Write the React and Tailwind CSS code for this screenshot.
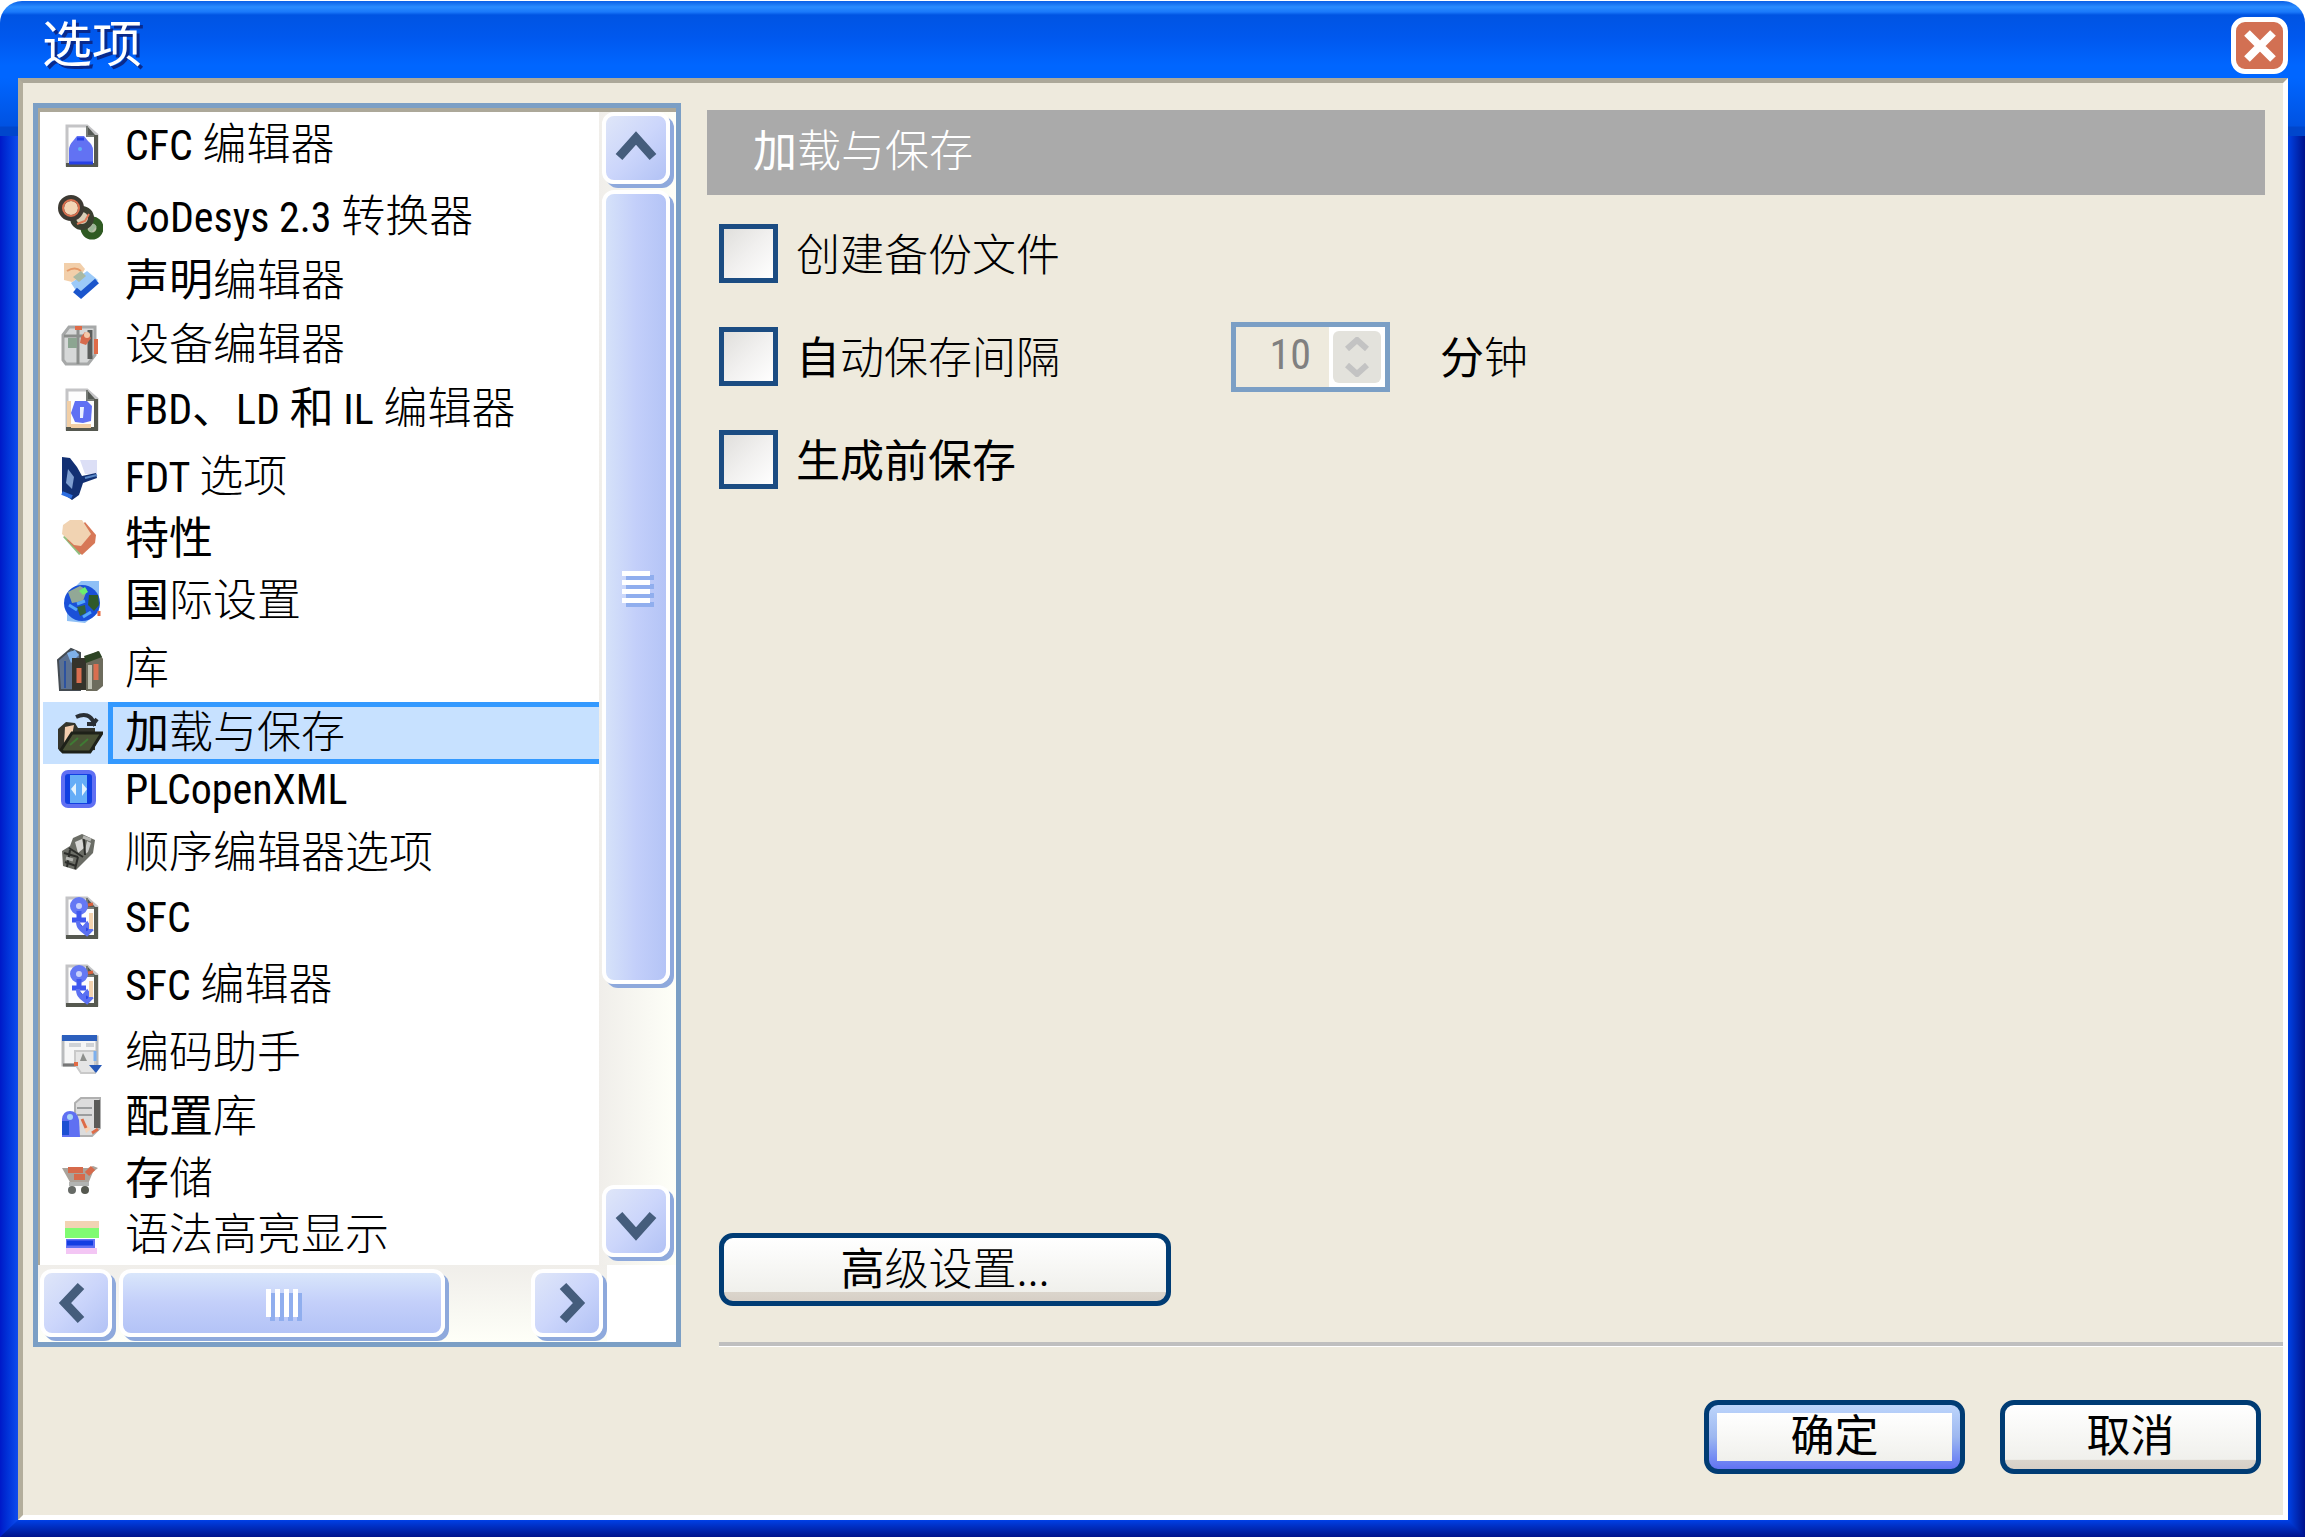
import React, { useState } from "react";

const PageIcon = ({ children }) => (
  <>
    <path d="M12 5h20l10 9v30H12z" fill="#fdfdfd" stroke="#c4c4c6" strokeWidth="3" />
    <path d="M32 5v10h9" fill="#555a55" stroke="#777b77" strokeWidth="2" />
    <path d="M41 14v30H11" fill="none" stroke="#55584f" strokeWidth="4" />
    {children}
  </>
);

const SfcGlyph = () => (
  <PageIcon>
    <circle cx="24" cy="13" r="6" fill="#c9d2fb" stroke="#6478f4" strokeWidth="6" />
    <path d="M24 18v10M17 27h14" stroke="#3f57ee" strokeWidth="5" />
    <path d="M23 28q0 9 8 9M27 37l5-6 4 6-4 4z" stroke="#5b70f2" strokeWidth="4" fill="#2b46e8" />
    <path d="M36 20v16" stroke="#f2d2b0" strokeWidth="4" />
    <path d="M33 12l5-1" stroke="#d8603c" strokeWidth="3" />
  </PageIcon>
);

const ICONS = {
  cfc: (
    <PageIcon>
      <path d="M14 41V29q0-5 4-9l4-5h7l4 5q5 4 5 9v12z" fill="#6272f3" />
      <path d="M14 42h24M22 18h7" stroke="#2740e6" strokeWidth="3" />
      <circle cx="25" cy="28" r="2" fill="#5fb0f6" />
    </PageIcon>
  ),
  codesys: (
    <>
      <circle cx="37" cy="35" r="8" fill="#b9bda6" stroke="#2f5a22" strokeWidth="7" />
      <circle cx="27" cy="25" r="9" fill="#d9d0b8" stroke="#3a3f30" strokeWidth="6" />
      <circle cx="16" cy="15" r="10" fill="#f3d5b5" stroke="#3d3a33" strokeWidth="6" />
      <circle cx="16" cy="15" r="8" fill="none" stroke="#d9704f" strokeWidth="2" />
      <path d="M22 31l8-3 4-7" stroke="#e07a58" strokeWidth="2" fill="none" />
      <path d="M35 38l5-6" stroke="#9bb596" strokeWidth="4" />
    </>
  ),
  declaration: (
    <>
      <path d="M16 26l16-12 11 9-17 18z" fill="#9ccaf8" />
      <path d="M20 33l6 5 16-14" fill="none" stroke="#1b55cc" strokeWidth="6" />
      <path d="M9 6h16l5 6-5 8-8 5-8-2z" fill="#f2cfaa" />
      <path d="M12 14q8-5 14 0" fill="none" stroke="#e59a68" strokeWidth="2" />
      <path d="M18 20l8-6 5 5-7 6z" fill="#a9b9a4" />
    </>
  ),
  device: (
    <>
      <path d="M8 14l6-8h26v28l-7 9H11l-3-4z" fill="#d6d8d8" stroke="#a6a8a8" strokeWidth="3" />
      <path d="M23 8v35M9 15h22" stroke="#8b8e8c" strokeWidth="3" fill="none" />
      <path d="M35 9v29" stroke="#5a5d5b" strokeWidth="5" />
      <rect x="13" y="17" width="9" height="10" fill="#8ca591" />
      <path d="M26 16l4-5 6 6-5 7-6-2z" fill="#d66a4c" />
      <path d="M20 7h7M41 18v15" stroke="#df6b48" strokeWidth="4" />
      <circle cx="32" cy="14" r="3" fill="#f6c8a8" />
    </>
  ),
  fbd: (
    <PageIcon>
      <path d="M14 16v26M16 41h20" stroke="#f2cfa6" strokeWidth="4" />
      <path d="M20 16h12l5 5-1 15-8 2-8-1-4-9z" fill="#6070f3" />
      <path d="M25 22h4l-1 11h-3z" fill="#eaf0ff" />
    </PageIcon>
  ),
  fdt: (
    <>
      <path d="M25 7h17v14H30z" fill="#dcdff6" />
      <path d="M7 4l8 1 7 9 5 9 14-3 1 5-14 5-4 12-7 5-10-7z" fill="#123073" />
      <path d="M13 16l6 8-2 12-6-6z" fill="#7f9fd0" />
      <path d="M7 40l10 4" stroke="#2d6ee0" strokeWidth="4" />
      <path d="M30 25l12-3" stroke="#5b89c8" strokeWidth="2" />
    </>
  ),
  properties: (
    <>
      <path d="M8 22l16 18 5-3-18-17z" fill="#8fbf80" />
      <path d="M30 7l11 13-1 8-13 12-15-15z" fill="#d77857" />
      <path d="M15 5h12l9 14-10 12-7-1L7 19l1-9z" fill="#f1d3b2" />
    </>
  ),
  globe: (
    <>
      <path d="M26 4h18v31L30 46 12 44V18z" fill="#8fc0f6" />
      <circle cx="27" cy="26" r="18" fill="#1a50d8" />
      <path d="M13 15l12-6 7 4-4 11-11 2z" fill="#92a896" />
      <path d="M24 14l6-4 3 5-5 3z" fill="#6bf06d" />
      <path d="M34 18h9l1 10-5 6-6-6z" fill="#2f5a2a" />
      <path d="M22 30l8-2 1 8-6 3z" fill="#31623c" />
      <path d="M14 28l8 5M30 24l-8 3M28 40l8-5" stroke="#55a8fa" strokeWidth="3" />
      <path d="M44 34v5" stroke="#e4693f" strokeWidth="3" />
    </>
  ),
  library: (
    <>
      <path d="M3 15l13-11 9 4v37H5z" fill="#5c7190" stroke="#444b52" strokeWidth="2" />
      <path d="M12 8l8-3 4 5-8 8z" fill="#7fb0e8" />
      <path d="M17 13h14v32H17z" fill="#35332b" />
      <path d="M31 12l12-6 5 8v27l-6 5H31z" fill="#6d6c5d" />
      <path d="M29 11l15-5 3 6-16 6z" fill="#2d4424" />
      <path d="M24 23v15M41 19v16" stroke="#da6e50" strokeWidth="5" />
      <path d="M35 20v24" stroke="#bfc0b2" strokeWidth="4" />
      <path d="M10 16v27" stroke="#2c52a0" strokeWidth="2" />
    </>
  ),
  loadsave: (
    <>
      <path d="M3 20l8-7 9 1 3 5h17v22L8 44l-5-4z" fill="#34352c" />
      <path d="M10 18l9-2-2 11-8 9z" fill="#f3cdae" />
      <path d="M6 41l11-17h30L35 43H8z" fill="#4a5236" stroke="#1e2119" strokeWidth="3" />
      <path d="M15 36l8-7M25 37l8-7" stroke="#3f7a34" strokeWidth="2" />
      <path d="M21 8q13-6 18 6l3-4M32 15h9" fill="none" stroke="#2a2f35" strokeWidth="4" />
    </>
  ),
  plcopen: (
    <>
      <rect x="8" y="7" width="31" height="34" rx="5" fill="#1140e2" stroke="#6070f3" strokeWidth="4" />
      <path d="M15 10h17v28H15z" fill="#65adf7" />
      <path d="M21 18l-5 6 5 7zM27 18l5 6-5 7z" fill="#e4f3fd" />
    </>
  ),
  sequence: (
    <>
      <path d="M7 22l8-5 3-8 9-4 13 6-2 13-17 17-13-4z" fill="#6b6d66" />
      <path d="M20 13l7-3 2 9-6 5z" fill="#d8d8d6" />
      <path d="M32 12l4 2-3 9-4 3z" fill="#cbccca" />
      <path d="M9 24l14 4M10 33l11 4M14 19l14 9M23 28l-3 12M29 9l1 17M15 21l-3 17" stroke="#2c2d2a" strokeWidth="2" />
      <path d="M11 29l7 2M28 8l8 3" stroke="#b5b6b2" strokeWidth="3" />
    </>
  ),
  sfc: <SfcGlyph />,
  coding: (
    <>
      <path d="M8 8h34v28H8z" fill="#f6f6f6" stroke="#b9bbbd" strokeWidth="3" />
      <path d="M7 9h35" stroke="#2c5fbd" strokeWidth="6" />
      <path d="M14 16h12M31 16h8" stroke="#cfd2d6" strokeWidth="4" />
      <path d="M8 36h13" stroke="#777" strokeWidth="3" />
      <path d="M20 22h20v22H26l-6-9z" fill="#e5e5e5" stroke="#c9c9c9" strokeWidth="2" />
      <path d="M28 24l4 8h-7z" fill="#8d8f8c" />
      <path d="M19 33h4v4h-4z" fill="#e26b45" />
      <path d="M40 22v10" stroke="#7db0ee" strokeWidth="3" />
      <path d="M34 36h13l-6 8z" fill="#2558b8" />
    </>
  ),
  repository: (
    <>
      <path d="M20 10l6-5h19v30l-8 8H20z" fill="#dcdcdc" stroke="#b0b0b0" strokeWidth="2" />
      <path d="M42 7v28" stroke="#5a5a58" strokeWidth="6" />
      <path d="M22 15h15M22 22h15" stroke="#9b9d9e" strokeWidth="2" />
      <path d="M7 26q1-8 8-8t9 9l1 17H7z" fill="#5f70f2" />
      <path d="M7 28h7v14H7z" fill="#1c4fd2" />
      <circle cx="15" cy="24" r="3" fill="#a9d4f6" />
      <path d="M27 27l9 9-5 4z" fill="#f6d3b6" />
      <path d="M27 26l4 9M37 40l6-4" stroke="#dd6c48" strokeWidth="3" />
    </>
  ),
  store: (
    <>
      <path d="M7 13h26l5-2 5 2-5 4-5 12H16z" fill="#a9a29a" />
      <path d="M13 15h15M19 22h11M32 19l6-6" stroke="#d66a4b" strokeWidth="6" />
      <path d="M14 29h20" stroke="#b2b4b2" strokeWidth="4" />
      <circle cx="17" cy="35" r="4" fill="#666a66" />
      <circle cx="30" cy="35" r="4" fill="#55584f" />
    </>
  ),
  syntax: (
    <>
      <path d="M10 10h34v7H10z" fill="#f2d3b3" />
      <path d="M10 17h34v10H10z" fill="#80fb72" />
      <path d="M11 28h29v9H11z" fill="#6272f3" />
      <path d="M12 32h26" stroke="#123de2" strokeWidth="5" />
      <path d="M11 37h31v6H11z" fill="#f3c6f4" />
    </>
  ),
};

// text between asterisks is set in the heavier face
const ITEMS = [
  { icon: "cfc", label: "CFC 编辑器", height: "h-[72px]" },
  { icon: "codesys", label: "CoDesys 2.3 转换器", height: "h-16" },
  { icon: "declaration", label: "*声明*编辑器", height: "h-16" },
  { icon: "device", label: "设备编辑器", height: "h-16" },
  { icon: "fbd", label: "FBD*、*LD *和* IL 编辑器", height: "h-[68px]" },
  { icon: "fdt", label: "FDT 选项", height: "h-[62px]" },
  { icon: "properties", label: "*特性*", height: "h-[62px]" },
  { icon: "globe", label: "*国*际设置", height: "h-[68px]" },
  { icon: "library", label: "库", height: "h-16" },
  { icon: "loadsave", label: "*加*载与保存", height: "h-[56px]" },
  { icon: "plcopen", label: "PLCopenXML", height: "h-16" },
  { icon: "sequence", label: "顺序编辑器选项", height: "h-16" },
  { icon: "sfc", label: "SFC", height: "h-[68px]" },
  { icon: "sfc", label: "SFC 编辑器", height: "h-[68px]" },
  { icon: "coding", label: "编码助手", height: "h-16" },
  { icon: "repository", label: "*配置*库", height: "h-[62px]" },
  { icon: "store", label: "*存*储", height: "h-[56px]" },
  { icon: "syntax", label: "语法高亮显示", height: "h-[56px]" },
];

function Label({ text }) {
  return text.split(/(\*[^*]+\*|[ -)+-~]+)/).map((part, i) => {
    if (part.startsWith("*")) return <span key={i} className="font-normal">{part.slice(1, -1)}</span>;
    if (/^[ -~]/.test(part)) {
      return <span key={i} className="font-['Roboto_Condensed','Roboto',sans-serif] text-[42px] font-normal">{part}</span>;
    }
    return part;
  });
}

const ARROWS = {
  up: "M5 31L22 12l17 19",
  down: "M5 16l17 19 17-19",
  left: "M27 5L11 22l16 17",
  right: "M18 5l16 17-16 17",
};

function ScrollButton({ dir, label }) {
  const size = dir === "up" || dir === "down" ? "h-[72px] w-[68px]" : "h-[68px] w-[72px]";
  return (
    <button
      type="button"
      aria-label={label}
      className={`flex shrink-0 items-center justify-center rounded-xl border-4 border-white bg-linear-to-br from-[#dfe6f8] via-[#ccd6fb] to-[#b2c2f5] shadow-[4px_4px_0_#8ea9dc] ${size}`}
    >
      <svg viewBox="0 0 44 44" className="h-11 w-11" fill="none" stroke="#455d7c" strokeWidth="9">
        <path d={ARROWS[dir]} />
      </svg>
    </button>
  );
}

function CheckRow({ id, label, children }) {
  return (
    <div className="flex h-[103px] items-center">
      <div className="flex w-[512px] items-center gap-[18px]">
        <input
          id={id}
          type="checkbox"
          className="h-[59px] w-[59px] shrink-0 appearance-none border-5 border-[#1b4c82] bg-linear-to-br from-[#e0dfdc] via-[#f1f0ef] to-white checked:bg-[#7b9fc5]"
        />
        <label htmlFor={id} className="pb-1 whitespace-nowrap">
          <Label text={label} />
        </label>
      </div>
      {children}
    </div>
  );
}

export default function App() {
  const [selected, setSelected] = useState(9);
  const [minutes, setMinutes] = useState("10");

  return (
    <div className="flex min-h-screen flex-col bg-white pt-px pr-px pb-px font-['Noto_Sans_CJK_SC',sans-serif] text-[44px] leading-[44px] font-light text-black">
      <header className="flex h-[77px] shrink-0 items-center justify-between rounded-t-[22px] bg-[linear-gradient(#0a5fe6_0px,#2a8cff_6px,#1a78fa_11px,#0054e3_14px,#0058ee_36px,#0066ff_64px,#0066ff_77px)] pr-[17px] pl-[42px]">
        <h1 className="text-[50px] font-normal text-white [text-shadow:3px_3px_0_#0a2a8c]">选项</h1>
        <button
          type="button"
          aria-label="关闭"
          className="mt-3 flex h-[57px] w-[57px] items-center justify-center rounded-[14px] border-[5px] border-white bg-[#d27053]"
        >
          <svg viewBox="0 0 32 32" className="h-8 w-8" stroke="#fff" strokeWidth="8">
            <path d="M3 3l26 26M29 3L3 29" />
          </svg>
        </button>
      </header>

      <div className="flex flex-1">
        <div className="flex w-[18px] shrink-0 flex-col">
          <div className="h-[58px] bg-[linear-gradient(#0066ff,#0052e2_48px,#0046cc_49px,#0046cc)]" />
          <div className="flex-1 bg-linear-to-r from-[#0018c8] to-[#0f4cee]" />
        </div>

        <div className="flex min-w-0 flex-1 flex-col border-5 border-t-[#aca899] border-r-white border-b-white border-l-[#b3ae9c] bg-[#eeeadd]">
          <div className="flex flex-1 pt-5 pl-[10px]">
            <nav className="flex w-[648px] shrink-0 flex-col border-5 border-[#7b9fc5] bg-white">
              <div className="flex flex-1 border-t-4 border-l-2 border-[#aca899]">
                <ul className="min-w-0 flex-1 pt-[2px] pl-[3px]">
                  {ITEMS.map((item, i) => {
                    const on = i === selected;
                    return (
                      <li key={i} className={item.height}>
                        <button
                          type="button"
                          onClick={() => setSelected(i)}
                          className={`flex h-[62px] w-full items-center pl-3 text-left ${on ? "bg-[#c7e1ff]" : ""}`}
                        >
                          <svg viewBox="0 0 48 48" className="mr-[5px] h-12 w-12 shrink-0" fill="none">
                            {ICONS[item.icon]}
                          </svg>
                          <span
                            className={`h-full flex-1 border-y-5 border-l-5 pl-3 whitespace-pre ${
                              on ? "border-[#3399ff]" : "border-transparent"
                            }`}
                          >
                            <Label text={item.label} />
                          </span>
                        </button>
                      </li>
                    );
                  })}
                </ul>
                <div className="flex w-[77px] flex-col items-start gap-[6px] bg-linear-to-r from-[#f0eeea] to-[#fefff8] pb-2 pl-[3px]">
                  <ScrollButton dir="up" label="向上滚动" />
                  <div className="flex w-[68px] basis-[794px] flex-col items-center justify-center gap-1 rounded-xl border-4 border-white bg-linear-to-r from-[#d6e2f9] via-[#c3cffa] to-[#b4c4f6] shadow-[4px_4px_0_#8ea9dc]">
                    {[0, 1, 2, 3].map((n) => (
                      <div key={n} className="h-[5px] w-7 bg-white shadow-[4px_4px_0_#90aeee]" />
                    ))}
                  </div>
                  <div className="mt-auto">
                    <ScrollButton dir="down" label="向下滚动" />
                  </div>
                </div>
              </div>
              <div className="flex h-[77px] shrink-0 pr-[69px]">
                <div className="flex flex-1 items-start gap-[7px] bg-linear-to-b from-[#f0eeea] to-[#fefff8] pt-1 pr-1 pl-[2px]">
                  <ScrollButton dir="left" label="向左滚动" />
                  <div className="flex h-[68px] w-[326px] items-center justify-center gap-1 rounded-xl border-4 border-white bg-linear-to-t from-[#b3c3f6] via-[#c3cffa] to-[#d9e6fb] shadow-[4px_4px_0_#8ea9dc]">
                    {[0, 1, 2, 3].map((n) => (
                      <div key={n} className="h-7 w-[5px] bg-white shadow-[4px_4px_0_#90aeee]" />
                    ))}
                  </div>
                  <div className="ml-auto">
                    <ScrollButton dir="right" label="向右滚动" />
                  </div>
                </div>
              </div>
            </nav>

            <main className="ml-[26px] flex min-w-0 flex-1 flex-col pt-[7px]">
              <h2 className="mr-[18px] h-[85px] bg-[#aaaaaa] pt-4 pl-[46px] text-white">
                <Label text="*加*载与保存" />
              </h2>
              <form className="mt-[7px] flex flex-1 flex-col items-start pl-3">
                <CheckRow id="backup" label="创建备份文件" />
                <CheckRow id="autosave" label="*自*动保存间隔">
                  <div className="flex h-[70px] w-[159px] border-5 border-[#7b9fc5]">
                    <input
                      id="minutes"
                      type="text"
                      disabled
                      value={minutes}
                      onChange={(e) => setMinutes(e.target.value)}
                      className="w-0 flex-1 pr-[18px] pb-1 text-right font-['Roboto_Condensed','Roboto',sans-serif] text-[42px] font-normal text-[#808080]"
                    />
                    <div className="flex w-14 items-center justify-center bg-white">
                      <div className="flex h-[52px] w-12 flex-col items-center justify-center gap-3 rounded-md bg-[#e3e2dc]">
                        <svg viewBox="0 0 24 14" className="h-[14px] w-6" fill="none" stroke="#c3c3c3" strokeWidth="6">
                          <path d="M2 12L12 3l10 9" />
                        </svg>
                        <svg viewBox="0 0 24 14" className="h-[14px] w-6" fill="none" stroke="#c3c3c3" strokeWidth="6">
                          <path d="M2 2l10 9 10-9" />
                        </svg>
                      </div>
                    </div>
                  </div>
                  <label htmlFor="minutes" className="ml-[50px] pb-1">
                    <Label text="*分*钟" />
                  </label>
                </CheckRow>
                <CheckRow id="prebuild" label="*生成前保存*" />
                <button
                  type="button"
                  className="mt-auto mb-9 h-[73px] w-[452px] rounded-[14px] border-5 border-[#003c74] bg-[linear-gradient(#ffffff,#f0f0ec_85%,#dbd5cc_86%,#d6cfc6)] pb-2"
                >
                  <span className="font-normal">高</span>级设置...
                </button>
              </form>
              <div className="ml-3 h-[5px] border-t-4 border-b border-t-[#bfbfbf] border-b-white" />
            </main>
          </div>

          <footer className="flex shrink-0 justify-end gap-[35px] pt-[53px] pr-[22px] pb-[41px] font-normal">
            <button
              type="button"
              className="h-[74px] w-[261px] rounded-[14px] border-5 border-[#003c74] bg-linear-to-b from-[#bdd5fb] via-[#9db7f0] to-[#6272f3] p-2"
            >
              <span className="flex h-full items-center justify-center bg-linear-to-b from-white to-[#f0f0ec] pb-2">确定</span>
            </button>
            <button
              type="button"
              className="h-[74px] w-[261px] rounded-[14px] border-5 border-[#003c74] bg-[linear-gradient(#ffffff,#f0f0ec_85%,#dbd5cc_86%,#d6cfc6)] pb-2"
            >
              取消
            </button>
          </footer>
        </div>

        <div className="flex w-[17px] shrink-0 flex-col">
          <div className="h-[58px] bg-[linear-gradient(#0066ff,#0052e2_48px,#0046cc_49px,#0046cc)]" />
          <div className="flex-1 bg-linear-to-r from-[#0042e6] to-[#00128c]" />
        </div>
      </div>

      <div className="flex h-[17px] shrink-0 justify-between bg-linear-to-b from-[#0040e6] to-[#00128c]">
        <div className="w-[18px] bg-linear-to-r from-[#0018c8] to-[#0f4cee] [clip-path:polygon(0_0,100%_0,0_100%)]" />
        <div className="w-[17px] bg-linear-to-r from-[#0042e6] to-[#00128c] [clip-path:polygon(0_0,100%_0,100%_100%)]" />
      </div>
    </div>
  );
}
